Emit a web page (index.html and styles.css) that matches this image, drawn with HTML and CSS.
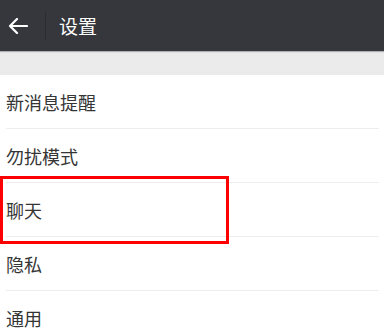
FILE: index.html
```html
<!DOCTYPE html>
<html lang="zh-CN">
<head>
<meta charset="utf-8">
<title>设置</title>
<link rel="stylesheet" href="styles.css">
</head>
<body>
<header class="topbar">
  <div class="back">
    <svg width="20" height="16" viewBox="0 0 20 16" class="back-icon">
      <path d="M19 8 H2 M9 1 L2 8 L9 15" fill="none" stroke="#fff" stroke-width="2.2" stroke-linecap="round" stroke-linejoin="round"/>
    </svg>
  </div>
  <div class="sep"></div>
  <div class="title">设置</div>
</header>
<div class="band"></div>
<ul class="list">
  <li class="item">新消息提醒</li>
  <li class="item">勿扰模式</li>
  <li class="item">聊天<span class="highlight"></span></li>
  <li class="item">隐私</li>
  <li class="item">通用</li>
</ul>
</body>
</html>
```
FILE: styles.css
```css
html, body {
  margin: 0;
  padding: 0;
  background: #fff;
  font-family: "Noto Sans CJK SC", "Noto Sans", sans-serif;
  overflow: hidden;
}
.topbar {
  height: 51px;
  background: #36373c;
  display: flex;
  align-items: center;
  box-shadow: 0 1px 1px rgba(0,0,0,0.25);
  position: relative;
  z-index: 1;
}
.back {
  width: 45px;
  height: 51px;
  display: flex;
  align-items: center;
  padding-left: 8px;
  box-sizing: border-box;
}
.back-icon {
  display: block;
}
.sep {
  width: 1px;
  height: 27px;
  background: #2b2c30;
}
.title {
  margin-left: 13px;
  color: #fff;
  font-size: 19px;
  line-height: 1;
}
.band {
  height: 24px;
  background: #ebebeb;
}
.list {
  list-style: none;
  margin: 0;
  padding: 0;
}
.item {
  position: relative;
  margin: 0 5px 0 6px;
  height: 53px;
  border-bottom: 1px solid #ededed;
  display: flex;
  align-items: center;
  font-size: 18px;
  color: #353535;
}
.highlight {
  position: absolute;
  left: -6px;
  top: -7px;
  width: 229px;
  height: 68px;
  border: 3px solid #ff0000;
  box-sizing: border-box;
}
```
